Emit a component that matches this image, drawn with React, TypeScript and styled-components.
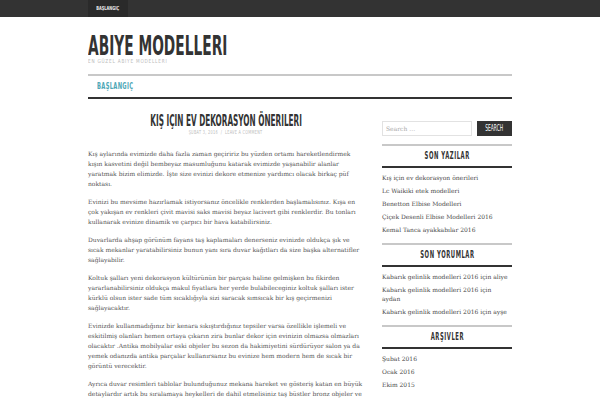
import React from "react";
import styled, { createGlobalStyle } from "styled-components";

const Global = createGlobalStyle`
  html, body { margin: 0; padding: 0; background: #fff; }
  body { font-family: "DejaVu Serif", serif; color: #555; }
  * { box-sizing: border-box; }
`;

const Cond = styled.span<{ $sx: number; $origin?: string }>`
  display: inline-block;
  flex: none;
  white-space: nowrap;
  transform: scaleX(${(p) => p.$sx});
  transform-origin: ${(p) => p.$origin || "left"} center;
`;

const heading = `font-family: "DejaVu Sans", sans-serif; text-transform: uppercase;`;

const Wrapper = styled.div`
  width: 424px;
  margin: 0 auto;
`;

const TopBar = styled.div`
  height: 17px;
  background: #333;
`;

const TopItem = styled.a`
  display: flex;
  justify-content: center;
  width: 40px;
  height: 17px;
  background: #2a2a2a;
  color: #e6e6e6;
  ${heading}
  font-weight: bold;
  font-size: 5.5px;
  line-height: 17px;
  text-decoration: none;
`;

const Header = styled.header`
  padding-top: 18.3px;
`;

const SiteTitle = styled.h1`
  margin: 0;
  ${heading}
  font-weight: bold;
  font-size: 27px;
  line-height: 22px;
  color: #333;
`;

const Tagline = styled.div`
  margin-top: 1.7px;
  ${heading}
  font-size: 5.5px;
  letter-spacing: 1px;
  line-height: 4px;
  color: #bbb;
`;

const Nav = styled.nav`
  margin-top: 10.7px;
  border-top: 2px solid #c8c8c8;
  border-bottom: 2px solid #333;
  height: 25px;
  display: flex;
  align-items: center;
  padding-left: 9px;
`;

const NavItem = styled.a`
  ${heading}
  font-weight: bold;
  font-size: 8px;
  letter-spacing: 0.5px;
  color: #4ea7b6;
  text-decoration: none;
  line-height: 21px;
`;

const Columns = styled.div`
  display: flex;
  gap: 18px;
  align-items: flex-start;
`;

const Main = styled.main`
  width: 276px;
`;

const PostTitle = styled.h2`
  margin: 14.3px 0 0;
  display: flex;
  justify-content: center;
  ${heading}
  font-weight: bold;
  font-size: 16.5px;
  line-height: 16px;
  color: #333;
`;

const Meta = styled.div`
  display: flex;
  justify-content: center;
  ${heading}
  font-size: 5.5px;
  letter-spacing: 0.5px;
  line-height: 6px;
  color: #bbb;
`;

const Body = styled.div`
  margin-top: 14.4px;
`;

const Para = styled.p`
  margin: 0 0 8px;
  font-family: "DejaVu Serif", serif;
  font-size: 6px;
  line-height: 10px;
  color: #555;
`;

const Sidebar = styled.aside`
  width: 130px;
  padding-top: 22px;
`;

const SearchForm = styled.form`
  display: flex;
  justify-content: space-between;
  height: 15px;
  margin-bottom: 8px;
`;

const SearchInput = styled.input`
  width: 90px;
  height: 15px;
  border: 1px solid #e2e2e2;
  padding: 0 3px;
  font-family: "DejaVu Serif", serif;
  font-size: 6px;
  color: #999;
  outline: none;
  &::placeholder { color: #aaa; }
`;

const SearchButton = styled.button`
  display: flex;
  justify-content: center;
  align-items: center;
  width: 35px;
  height: 15px;
  border: none;
  padding: 0;
  background: #333;
  color: #fff;
  ${heading}
  font-size: 8px;
  line-height: 15px;
  overflow: visible;
`;

const Widget = styled.section`
  border-top: 2px solid #c8c8c8;
`;

const WidgetTitle = styled.h3`
  margin: 0;
  height: 22px;
  display: flex;
  justify-content: center;
  border-bottom: 2px solid #333;
  ${heading}
  font-weight: bold;
  font-size: 9.6px;
  letter-spacing: 1px;
  line-height: 20px;
  color: #333;
`;

const List = styled.ul`
  list-style: none;
  margin: 0;
  padding: 5.4px 3px 8.6px 0;
`;

const Item = styled.li`
  font-family: "DejaVu Serif", serif;
  font-size: 6px;
  line-height: 9px;
  color: #4a4a4a;
  margin-bottom: 4px;
  &:last-child { margin-bottom: 0; }
`;

const paragraphs = [
  "Kış aylarında evimizde daha fazla zaman geçiririz bu yüzden ortamı hareketlendirmek kışın kasvetini değil bembeyaz masumluğunu katarak evimizde yaşanabilir alanlar yaratmak bizim elimizde. İşte size evinizi dekore etmenize yardımcı olacak birkaç püf noktası.",
  "Evinizi bu mevsime hazırlamak istiyorsanız öncelikle renklerden başlamalısınız. Kışa en çok yakışan ev renkleri çivit mavisi saks mavisi beyaz lacivert gibi renklerdir. Bu tonları kullanarak evinize dinamik ve çarpıcı bir hava katabilirsiniz.",
  "Duvarlarda ahşap görünüm fayans taş kaplamaları denerseniz evinizde oldukça şık ve sıcak mekanlar yaratabilirsiniz bunun yanı sıra duvar kağıtları da size başka alternatifler sağlayabilir.",
  "Koltuk şalları yeni dekorasyon kültürünün bir parçası haline gelmişken bu fikirden yararlanabilirsiniz oldukça makul fiyatlara her yerde bulabileceginiz koltuk şalları ister kürklü olsun ister sade tüm sıcaklığıyla sizi saracak sımsıcak bir kış geçirmenizi sağlayacaktır.",
  "Evinizde kullanmadığınız bir kenara sıkıştırdığınız tepsiler varsa özellikle işlemeli ve eskitilmiş olanları hemen ortaya çıkarın zira bunlar dekor için evinizin olmazsa olmazları olacaktır .Antika mobilyalar eski objeler bu sezon da hakimiyetini sürdürüyor salon ya da yemek odanızda antika parçalar kullanırsanız bu evinize hem modern hem de sıcak bir görüntü verecektir.",
  "Ayrıca duvar resimleri tablolar bulunduğunuz mekana hareket ve gösteriş katan en büyük detaylardır artık bu sıralamaya heykelleri de dahil etmelisiniz taş büstler bronz objeler ve küçük heykelcikler evinize bambaşka bir hava katacaktır.",
];

const widgets = [
  {
    title: "SON YAZILAR",
    items: [
      "Kış için ev dekorasyon önerileri",
      "Lc Waikiki etek modelleri",
      "Benetton Elbise Modelleri",
      "Çiçek Desenli Elbise Modelleri 2016",
      "Kemal Tanca ayakkabılar 2016",
    ],
  },
  {
    title: "SON YORUMLAR",
    items: [
      "Kabarık gelinlik modelleri 2016 için aliye",
      "Kabarık gelinlik modelleri 2016 için aydan",
      "Kabarık gelinlik modelleri 2016 için ayşe",
    ],
  },
  {
    title: "ARŞIVLER",
    items: ["Şubat 2016", "Ocak 2016", "Ekim 2015"],
  },
];

export default function App() {
  return (
    <>
      <Global />
      <TopBar>
        <Wrapper>
          <TopItem href="#">
            <Cond $sx={0.65} $origin="center">BAŞLANGIÇ</Cond>
          </TopItem>
        </Wrapper>
      </TopBar>
      <Wrapper>
        <Header>
          <SiteTitle>
            <Cond $sx={0.51}>ABIYE MODELLERI</Cond>
          </SiteTitle>
          <Tagline>
            <Cond $sx={0.77}>EN GÜZEL ABIYE MODELLERI</Cond>
          </Tagline>
          <Nav>
            <NavItem href="#">
              <Cond $sx={0.65}>BAŞLANGIÇ</Cond>
            </NavItem>
          </Nav>
        </Header>
        <Columns>
          <Main>
            <PostTitle>
              <Cond $sx={0.443} $origin="center">KIŞ IÇIN EV DEKORASYON ÖNERILERI</Cond>
            </PostTitle>
            <Meta>
              <Cond $sx={0.62} $origin="center">ŞUBAT 3, 2016 &nbsp;/&nbsp; LEAVE A COMMENT</Cond>
            </Meta>
            <Body>
              {paragraphs.map((t, i) => (
                <Para key={i}>{t}</Para>
              ))}
            </Body>
          </Main>
          <Sidebar>
            <SearchForm onSubmit={(e) => e.preventDefault()}>
              <SearchInput placeholder="Search …" />
              <SearchButton type="submit">
                <Cond $sx={0.55} $origin="center">SEARCH</Cond>
              </SearchButton>
            </SearchForm>
            {widgets.map((w) => (
              <Widget key={w.title}>
                <WidgetTitle>
                  <Cond $sx={0.55} $origin="center">{w.title}</Cond>
                </WidgetTitle>
                <List>
                  {w.items.map((it) => (
                    <Item key={it}>{it}</Item>
                  ))}
                </List>
              </Widget>
            ))}
          </Sidebar>
        </Columns>
      </Wrapper>
    </>
  );
}
